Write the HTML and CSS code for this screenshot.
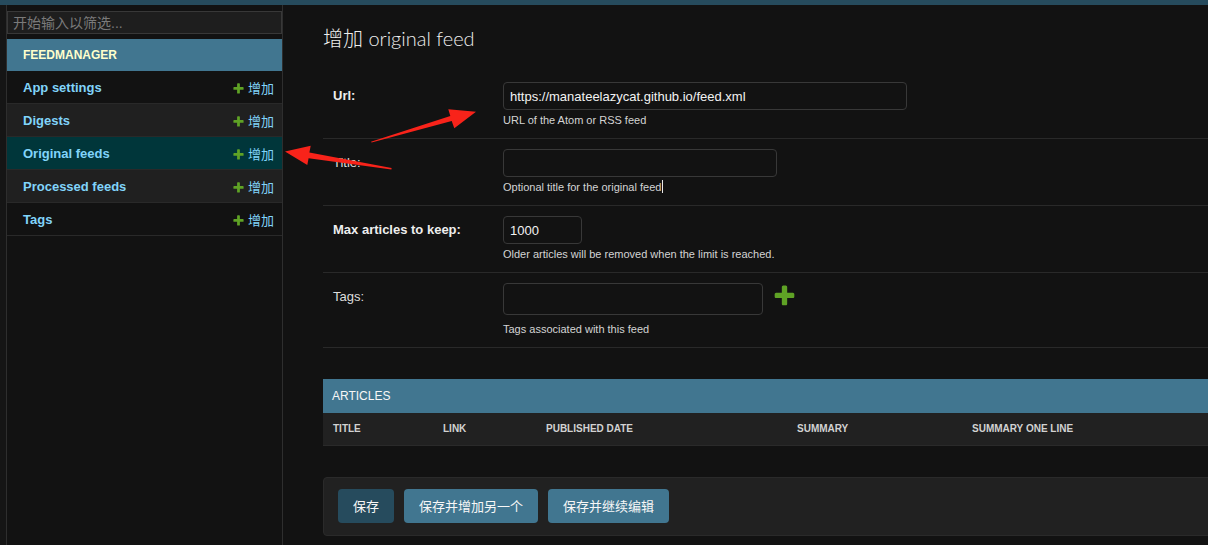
FILE: index.html
```html
<!DOCTYPE html>
<html lang="zh-CN">
<head>
<meta charset="utf-8">
<title>增加 original feed</title>
<link rel="stylesheet" href="styles.css">
</head>
<body>
<div class="header-bar"></div>
<div class="main">
  <div class="toggle"></div>
  <nav class="sidebar">
    <input class="nav-filter" type="text" placeholder="开始输入以筛选...">
    <div class="app-module">
      <div class="app-caption">FEEDMANAGER</div>
      <div class="app-row"><a class="model">App settings</a><a class="addlink"><svg class="plus-sm" viewBox="0 0 1792 1792"><path d="M1600 796v192q0 40-28 68t-68 28h-416v416q0 40-28 68t-68 28h-192q-40 0-68-28t-28-68v-416h-416q-40 0-68-28t-28-68v-192q0-40 28-68t68-28h416v-416q0-40 28-68t68-28h192q40 0 68 28t28 68v416h416q40 0 68 28t28 68z"/></svg>增加</a></div>
      <div class="app-row alt"><a class="model">Digests</a><a class="addlink"><svg class="plus-sm" viewBox="0 0 1792 1792"><path d="M1600 796v192q0 40-28 68t-68 28h-416v416q0 40-28 68t-68 28h-192q-40 0-68-28t-28-68v-416h-416q-40 0-68-28t-28-68v-192q0-40 28-68t68-28h416v-416q0-40 28-68t68-28h192q40 0 68 28t28 68v416h416q40 0 68 28t28 68z"/></svg>增加</a></div>
      <div class="app-row current"><a class="model">Original feeds</a><a class="addlink"><svg class="plus-sm" viewBox="0 0 1792 1792"><path d="M1600 796v192q0 40-28 68t-68 28h-416v416q0 40-28 68t-68 28h-192q-40 0-68-28t-28-68v-416h-416q-40 0-68-28t-28-68v-192q0-40 28-68t68-28h416v-416q0-40 28-68t68-28h192q40 0 68 28t28 68v416h416q40 0 68 28t28 68z"/></svg>增加</a></div>
      <div class="app-row alt"><a class="model">Processed feeds</a><a class="addlink"><svg class="plus-sm" viewBox="0 0 1792 1792"><path d="M1600 796v192q0 40-28 68t-68 28h-416v416q0 40-28 68t-68 28h-192q-40 0-68-28t-28-68v-416h-416q-40 0-68-28t-28-68v-192q0-40 28-68t68-28h416v-416q0-40 28-68t68-28h192q40 0 68 28t28 68v416h416q40 0 68 28t28 68z"/></svg>增加</a></div>
      <div class="app-row"><a class="model">Tags</a><a class="addlink"><svg class="plus-sm" viewBox="0 0 1792 1792"><path d="M1600 796v192q0 40-28 68t-68 28h-416v416q0 40-28 68t-68 28h-192q-40 0-68-28t-28-68v-416h-416q-40 0-68-28t-28-68v-192q0-40 28-68t68-28h416v-416q0-40 28-68t68-28h192q40 0 68 28t28 68v416h416q40 0 68 28t28 68z"/></svg>增加</a></div>
    </div>
  </nav>
  <div class="content">
    <h1>增加 original feed</h1>
    <div class="fieldset">
      <div class="form-row">
        <label class="required">Url:</label>
        <div class="field-body">
          <input class="vurl" type="text" value="https://manateelazycat.github.io/feed.xml">
          <div class="help">URL of the Atom or RSS feed</div>
        </div>
      </div>
      <div class="form-row">
        <label>Title:</label>
        <div class="field-body">
          <input class="vtext" type="text" value="">
          <div class="help">Optional title for the original feed<span class="ibeam"></span></div>
        </div>
      </div>
      <div class="form-row">
        <label class="required">Max articles to keep:</label>
        <div class="field-body">
          <input class="vint" type="text" value="1000">
          <div class="help">Older articles will be removed when the limit is reached.</div>
        </div>
      </div>
      <div class="form-row">
        <label>Tags:</label>
        <div class="field-body">
          <div class="related-wrapper">
            <div class="select-box"></div>
            <a class="add-related"><svg class="plus-lg" viewBox="0 0 1792 1792"><path d="M1600 796v192q0 40-28 68t-68 28h-416v416q0 40-28 68t-68 28h-192q-40 0-68-28t-28-68v-416h-416q-40 0-68-28t-28-68v-192q0-40 28-68t68-28h416v-416q0-40 28-68t68-28h192q40 0 68 28t28 68v416h416q40 0 68 28t28 68z"/></svg></a>
          </div>
          <div class="help">Tags associated with this feed</div>
        </div>
      </div>
    </div>

    <div class="inline-group">
      <h2>ARTICLES</h2>
      <table class="tabular">
        <colgroup>
          <col class="c1"><col class="c2"><col class="c3"><col class="c4"><col class="c5">
        </colgroup>
        <thead>
          <tr><th>Title</th><th>Link</th><th>Published date</th><th>Summary</th><th>Summary one line</th></tr>
        </thead>
      </table>
    </div>

    <div class="submit-row">
      <button class="btn default">保存</button>
      <button class="btn">保存并增加另一个</button>
      <button class="btn">保存并继续编辑</button>
    </div>
  </div>
</div>
<svg class="annotations" viewBox="0 0 1208 545" width="1208" height="545">
  <polygon points="371,141.8 450.3,116.1 448.3,109.3 476,111.7 454.3,128.3 451.7,120.9 371.6,142.6"/>
  <polygon points="285,151.5 310.7,145.7 309.4,152.6 391.6,168 391.4,169.6 308.6,158.2 307.3,165"/>
</svg>
</body>
</html>
```

FILE: styles.css
```css
* { box-sizing: border-box; }
html, body { margin: 0; padding: 0; }
body {
  background: #121212;
  color: #eeeeee;
  font-family: "Liberation Sans", Arial, "Noto Sans CJK SC", sans-serif;
  font-size: 13px;
  width: 1208px;
  height: 545px;
  overflow: hidden;
  position: relative;
}
a { color: #81d4fa; text-decoration: none; }

.header-bar { height: 5px; background: #264b5d; }

.main { display: flex; height: 540px; }

.toggle {
  flex: 0 0 7px;
  background: #151515;
  border-right: 1px solid #2e2e2e;
}

.sidebar {
  flex: 0 0 276px;
  border-right: 1px solid #2e2e2e;
  background: #121212;
  padding-top: 6px;
}

.nav-filter {
  display: block;
  width: 100%;
  height: 23px;
  margin: 0 0 5px;
  padding: 2px 5px;
  border: 1px solid #383838;
  background: #1e1e1e;
  color: #eee;
  font-family: "Liberation Sans", "Noto Sans CJK SC", sans-serif;
  font-size: 14px;
  outline: none;
}
.nav-filter::placeholder { color: #7a7a7a; }

.app-caption {
  background: #417690;
  color: #ffffcc;
  font-weight: bold;
  font-size: 12px;
  line-height: 16px;
  padding: 8px 16px;
}

.app-row {
  display: flex;
  justify-content: space-between;
  align-items: center;
  padding: 9px 8px 7px 16px;
  line-height: 16px;
  border-bottom: 1px solid #292929;
  background: #121212;
}
.app-row.alt { background: #202020; }
.app-row.current { background: #00363a; }
.app-row .model { font-weight: bold; font-size: 13px; }
.addlink {
  display: flex;
  align-items: center;
  font-size: 13px;
  font-family: "Noto Sans CJK SC", sans-serif;
}
.plus-sm { width: 13px; height: 13px; fill: #5fa225; margin-right: 3px; }

.content {
  flex: 1 0 auto;
  margin-right: -30px;
  padding: 20px 0 20px 40px;
}

h1 {
  margin: 0 0 20px;
  font-family: "Lato", "Noto Sans CJK SC", sans-serif;
  font-weight: 300;
  font-size: 20px;
  line-height: 27px;
  color: #eeeeee;
}

.form-row {
  display: flex;
  padding: 10px;
  border-bottom: 1px solid #292929;
}
.form-row label {
  flex: 0 0 170px;
  padding: 5px 10px 0 0;
  line-height: 17px;
  color: #dddddd;
}
.form-row label.required { font-weight: bold; color: #eeeeee; }

.field-body { display: flex; flex-direction: column; align-items: flex-start; }

.field-body input {
  height: 28px;
  padding: 5px 6px;
  border: 1px solid #383838;
  border-radius: 4px;
  background: #121212;
  color: #f2f2f2;
  font-family: "Liberation Sans", Arial, sans-serif;
  font-size: 13px;
  outline: none;
}
.vurl { width: 404px; }
.vtext { width: 274px; }
.vint { width: 79px; }

.help {
  margin-top: 3px;
  font-size: 11px;
  line-height: 15px;
  color: #d4d4d4;
}
.ibeam {
  display: inline-block;
  width: 1px;
  height: 13px;
  background: #e8e8e8;
  vertical-align: -2px;
  margin-left: 1px;
}

.related-wrapper {
  display: flex;
  align-items: flex-start;
  gap: 9px;
  margin-bottom: 4px;
}
.select-box {
  width: 260px;
  height: 32px;
  border: 1px solid #383838;
  border-radius: 4px;
  background: #121212;
}
.plus-lg { display: block; width: 25px; height: 25px; fill: #5fa225; }

.inline-group { margin-top: 31px; }
.inline-group h2 {
  margin: 0;
  background: #417690;
  color: #f7f7f7;
  font-weight: normal;
  font-size: 12px;
  line-height: 18px;
  padding: 8px 9px;
}
.tabular { border-collapse: collapse; width: 100%; }
.tabular .c1 { width: 110px; }
.tabular .c2 { width: 103px; }
.tabular .c3 { width: 251px; }
.tabular .c4 { width: 175px; }
.tabular th {
  text-align: left;
  text-transform: uppercase;
  font-size: 10px;
  font-weight: bold;
  line-height: 16px;
  padding: 8px 10px;
  color: #d2d2d2;
  background: #212121;
  border-bottom: 1px solid #2a2a2a;
}

.submit-row {
  margin-top: 31px;
  display: flex;
  gap: 10px;
  padding: 11px 14px 12px;
  background: #212121;
  border: 1px solid #2a2a2a;
  border-radius: 4px;
}
.btn {
  height: 34px;
  padding: 0 15px;
  border: none;
  border-radius: 4px;
  background: #417690;
  color: #f7f7f7;
  font-family: "Noto Sans CJK SC", sans-serif;
  font-size: 13px;
  line-height: 34px;
}
.btn.default { background: #264b5d; }

.annotations {
  position: absolute;
  top: 0;
  left: 0;
  pointer-events: none;
  fill: #f8231a;
}
```
